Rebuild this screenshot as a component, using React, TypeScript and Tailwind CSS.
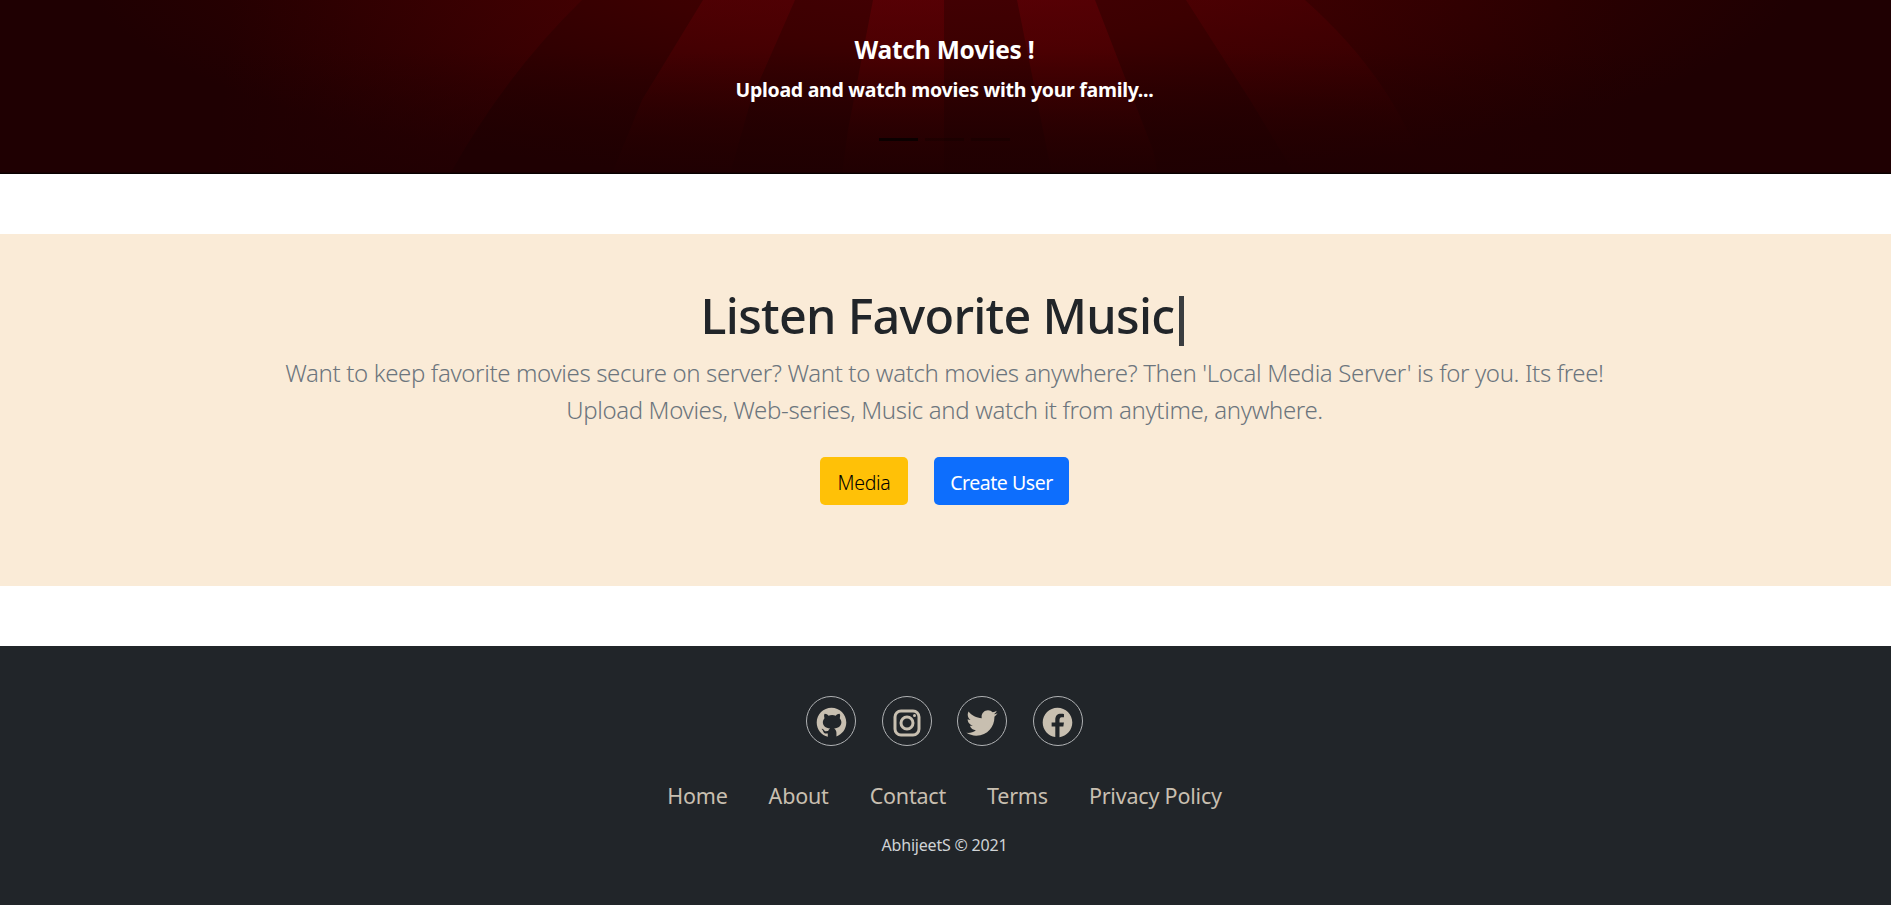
import type { ReactNode } from "react";

function SpotlightBackdrop() {
  return (
    <svg className="absolute inset-0 h-full w-full" viewBox="0 0 1891 174" preserveAspectRatio="none" aria-hidden="true">
      <defs>
        <radialGradient id="base" gradientUnits="userSpaceOnUse" cx="0" cy="0" r="1" gradientTransform="translate(945 -30) scale(860 215)">
          <stop offset="0" stopColor="#450004" />
          <stop offset="0.35" stopColor="#3c0001" />
          <stop offset="0.75" stopColor="#290001" />
          <stop offset="1" stopColor="#1f0002" />
        </radialGradient>
        <linearGradient id="ray" gradientUnits="userSpaceOnUse" x1="0" y1="0" x2="0" y2="174">
          <stop offset="0" stopColor="#6c0006" stopOpacity="0.48" />
          <stop offset="0.5" stopColor="#620003" stopOpacity="0.32" />
          <stop offset="1" stopColor="#480000" stopOpacity="0.12" />
        </linearGradient>
        <linearGradient id="softLeft" gradientUnits="userSpaceOnUse" x1="230" y1="0" x2="570" y2="30">
          <stop offset="0" stopColor="#560003" stopOpacity="0" />
          <stop offset="1" stopColor="#560003" stopOpacity="0.3" />
        </linearGradient>
        <linearGradient id="softRight" gradientUnits="userSpaceOnUse" x1="1305" y1="40" x2="1620" y2="0">
          <stop offset="0" stopColor="#4a0002" stopOpacity="0.15" />
          <stop offset="1" stopColor="#4a0002" stopOpacity="0" />
        </linearGradient>
        <linearGradient id="fade" gradientUnits="userSpaceOnUse" x1="0" y1="0" x2="0" y2="174">
          <stop offset="0.3" stopColor="#1f0002" stopOpacity="0" />
          <stop offset="1" stopColor="#1f0002" stopOpacity="0.75" />
        </linearGradient>
      </defs>
      <rect width="1891" height="174" fill="url(#base)" />
      <path d="M200 0H582Q505 75 450 174H200Z" fill="url(#softLeft)" />
      <path d="M703 0H795L751 100L730 174H612L642 100Z" fill="url(#ray)" opacity="0.75" />
      <path d="M873 0H944V174H842L848 130Z" fill="url(#ray)" />
      <path d="M1017 0H1095L1153 150L1158 174H1052L1047 150Z" fill="url(#ray)" />
      <path d="M1186 0H1305Q1395 80 1425 174H1295L1250 100Z" fill="url(#ray)" opacity="0.6" />
      <path d="M1305 0H1640V174H1425Q1395 80 1305 0Z" fill="url(#softRight)" />
      <rect width="1891" height="174" fill="url(#fade)" />
      <rect y="172.7" width="1891" height="1.3" fill="#080000" />
    </svg>
  );
}

function SocialLink({ label, children }: { label: string; children: ReactNode }) {
  return (
    <a href="#" aria-label={label} className="flex size-[50px] items-center justify-center rounded-full border border-[#b0b2b4] pt-[3px] text-[#c8bfb0]">
      {children}
    </a>
  );
}

const navLinks = ["Home", "About", "Contact", "Terms", "Privacy Policy"];

export default function App() {
  return (
    <div className="flex h-[905px] flex-col overflow-hidden bg-white font-['Noto_Sans','Open_Sans',sans-serif]">
      <section className="relative h-[174px] shrink-0 bg-[#1f0002]">
        <SpotlightBackdrop />
        <div className="relative flex flex-col items-center pt-[35px] pr-0.5 text-white">
          <h5 className="text-[24.5px] leading-[30px] font-bold tracking-[-0.2px]">Watch Movies !</h5>
          <p className="mt-[13px] text-[19.5px] leading-6 font-bold tracking-[-0.28px]">Upload and watch movies with your family...</p>
          <div className="mt-[36px] flex gap-[7px]">
            <span className="h-[3px] w-[39px] bg-black/70" />
            <span className="h-[3px] w-[39px] bg-black/20" />
            <span className="h-[3px] w-[39px] bg-black/20" />
          </div>
        </div>
      </section>

      <section className="mt-[60px] flex h-[352px] shrink-0 flex-col items-center bg-[#faebd7] pt-[51px] pr-1">
        <div className="flex h-[60px] items-start pr-0.5">
          <h1 className="text-[48.5px] leading-[60px] font-medium tracking-[-0.7px] whitespace-nowrap text-[#212529]">Listen Favorite Music</h1>
          <span className="mt-[11px] ml-[5px] h-[50px] w-[5px] bg-[#3a3d40]" />
        </div>
        <p className="mt-[9px] pl-0.5 text-center text-[24px] leading-[37px] font-light tracking-[-0.36px] whitespace-nowrap text-[#6c757d]">
          Want to keep favorite movies secure on server? Want to watch movies anywhere? Then 'Local Media Server' is for you. Its free!
          <br />
          Upload Movies, Web-series, Music and watch it from anytime, anywhere.
        </p>
        <div className="mt-[29px] flex gap-[26px] pl-0.5 text-[19.5px] leading-[29px]">
          <button className="h-12 w-[88px] rounded-[5px] bg-[#ffc107] pt-0.5 font-[350] tracking-[-0.3px] text-black">Media</button>
          <button className="h-12 w-[135px] rounded-[5px] bg-[#0d6efd] pt-0.5 tracking-[-0.45px] text-white">Create User</button>
        </div>
      </section>

      <footer className="mt-[60px] flex flex-1 flex-col items-center bg-[#212529] pt-[50px] pr-0.5">
        <div className="flex gap-[25.6px]">
          <SocialLink label="GitHub">
            <svg className="size-[37px] shrink-0" viewBox="0 0 30 30" fill="currentColor">
              <path d="M15,3C8.373,3,3,8.373,3,15c0,5.623,3.872,10.328,9.092,11.63C12.036,26.468,12,26.28,12,26.047v-2.051c-0.487,0-1.303,0-1.508,0c-0.821,0-1.551-0.353-1.905-1.009c-0.393-0.729-0.461-1.844-1.435-2.526c-0.289-0.227-0.069-0.486,0.264-0.451c0.615,0.174,1.125,0.596,1.605,1.222c0.478,0.627,0.703,0.769,1.596,0.769c0.433,0,1.081-0.025,1.691-0.121c0.328-0.833,0.895-1.6,1.588-1.962c-3.996-0.411-5.903-2.399-5.903-5.098c0-1.162,0.495-2.286,1.336-3.233C9.053,10.647,8.706,8.73,9.435,8c1.798,0,2.885,1.166,3.146,1.481C13.477,9.174,14.461,9,15.495,9c1.036,0,2.024,0.174,2.922,0.483C18.675,9.17,19.763,8,21.565,8c0.732,0.731,0.381,2.656,0.102,3.594c0.836,0.945,1.328,2.066,1.328,3.226c0,2.697-1.904,4.684-5.894,5.097C18.199,20.49,19,22.1,19,23.313v2.734c0,0.104-0.023,0.179-0.035,0.268C23.641,24.676,27,20.236,27,15C27,8.373,21.627,3,15,3z" />
            </svg>
          </SocialLink>
          <SocialLink label="Instagram">
            <svg className="size-[36px] shrink-0" viewBox="0 0 24 24" fill="none" stroke="currentColor" strokeWidth="2">
              <rect x="4" y="4" width="16" height="16" rx="4" />
              <circle cx="12" cy="12" r="4" />
              <circle cx="17" cy="7" r="1" fill="currentColor" stroke="none" />
            </svg>
          </SocialLink>
          <SocialLink label="Twitter">
            <svg className="size-[36px] shrink-0" viewBox="0 0 30 30" fill="currentColor">
              <path d="M28,6.937c-0.957,0.425-1.985,0.711-3.064,0.84c1.102-0.66,1.947-1.705,2.345-2.951c-1.03,0.611-2.172,1.055-3.388,1.295c-0.973-1.037-2.359-1.685-3.893-1.685c-2.946,0-5.334,2.389-5.334,5.334c0,0.418,0.048,0.826,0.138,1.215c-4.433-0.222-8.363-2.346-10.995-5.574C3.351,6.199,3.088,7.115,3.088,8.094c0,1.85,0.941,3.483,2.372,4.439c-0.874-0.028-1.697-0.268-2.416-0.667c0,0.023,0,0.044,0,0.067c0,2.585,1.838,4.741,4.279,5.23c-0.447,0.122-0.919,0.187-1.406,0.187c-0.343,0-0.678-0.034-1.003-0.095c0.679,2.119,2.649,3.662,4.983,3.705c-1.825,1.431-4.125,2.284-6.625,2.284c-0.43,0-0.855-0.025-1.273-0.075c2.361,1.513,5.164,2.396,8.177,2.396c9.812,0,15.176-8.128,15.176-15.177c0-0.231-0.005-0.461-0.015-0.69C26.38,8.945,27.285,8.006,28,6.937z" />
            </svg>
          </SocialLink>
          <SocialLink label="Facebook">
            <svg className="size-[37px] shrink-0" viewBox="0 0 30 30" fill="currentColor">
              <path d="M15,3C8.373,3,3,8.373,3,15c0,6.016,4.432,10.984,10.206,11.852V18.18h-2.969v-3.154h2.969v-2.099c0-3.475,1.693-5,4.581-5c1.383,0,2.115,0.103,2.461,0.149v2.753h-1.97c-1.226,0-1.654,1.163-1.654,2.473v1.724h3.593L19.73,18.18h-3.106v8.697C22.481,26.083,27,21.075,27,15C27,8.373,21.627,3,15,3z" />
            </svg>
          </SocialLink>
        </div>
        <nav className="mt-[33px] flex gap-[41px] text-[21.5px] leading-[33px] font-[450] tracking-[-0.2px] text-[#c8bfb0]">
          {navLinks.map((label) => (
            <a key={label} href="#">{label}</a>
          ))}
        </nav>
        <p className="mt-[21px] text-[16px] leading-6 tracking-[-0.2px] text-[#cfd3d6]">AbhijeetS © 2021</p>
      </footer>
    </div>
  );
}
